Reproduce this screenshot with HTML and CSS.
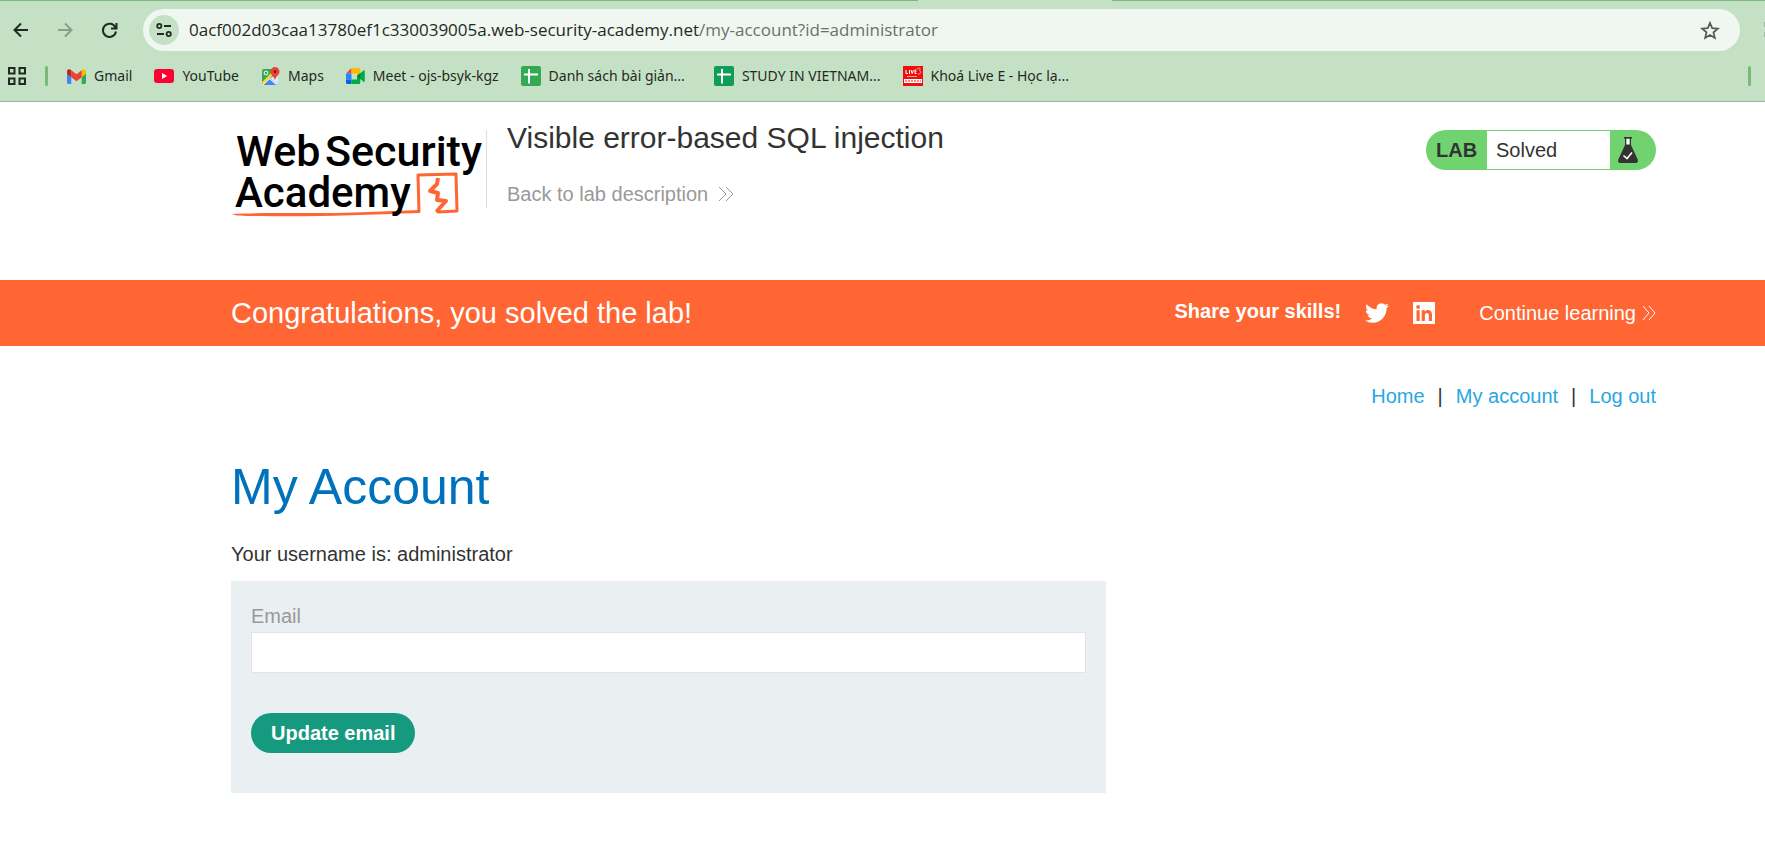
FILE: index.html
```html
<!DOCTYPE html>
<html lang="en">
<head>
<meta charset="utf-8">
<title>Visible error-based SQL injection</title>
<link rel="stylesheet" href="styles.css">
</head>
<body>
<div class="browser">
  <div class="tab-strip"><span class="active-tab"></span></div>
  <div class="toolbar">
    <button class="tool" aria-label="Back"><svg width="16" height="16" viewBox="0 0 16 16" fill="none" stroke="#1f2a22" stroke-width="2"><path d="M15 8H2M8 1.500 1.500 8 8 14.500"/></svg></button>
    <button class="tool" aria-label="Forward"><svg width="16" height="16" viewBox="0 0 16 16" fill="none" stroke="#84a086" stroke-width="2"><path d="M1 8h13M8 1.500 14.500 8 8 14.500"/></svg></button>
    <button class="tool" aria-label="Reload"><svg width="17" height="17" viewBox="0 0 17 17" fill="none" stroke="#1f2a22" stroke-width="2"><path d="M14.500 5.500A6.600 6.600 0 1 0 15 9.500M15.500 1v5.500H10"/></svg></button>
    <div class="address">
      <button class="site-info" aria-label="View site information"><svg width="16" height="14" viewBox="0 0 16 14" fill="none" stroke="#1f2a22" stroke-width="1.800"><circle cx="3.300" cy="3" r="2.100"/><path d="M8 3h7M1 11h7"/><circle cx="12.700" cy="11" r="2.100"/></svg></button>
      <div class="url">0acf002d03caa13780ef1c330039005a.web-security-academy.net<span class="path">/my-account?id=administrator</span></div>
      <button class="star" aria-label="Bookmark this tab"><svg width="20" height="19" viewBox="0 0 20 19" fill="none" stroke="#555b58" stroke-width="1.800"><path d="m10 2 2.200 5.200 5.600.5-4.300 3.700 1.300 5.500L10 14l-4.800 2.900 1.300-5.500L2.200 7.700l5.600-.5z"/></svg></button>
    </div>
    <svg class="extension" width="2" height="18" viewBox="0 0 2 18" fill="#9fb8a1"><path d="M1 1h1v5H1zM1 11h1v5H1z"/></svg>
  </div>
  <nav class="bookmarks" aria-label="Bookmarks">
    <button class="apps" aria-label="Apps"><svg width="18" height="18" viewBox="0 0 18 18" fill="none" stroke="#1f2a22" stroke-width="2"><path d="M1 1h5.500v5.500H1zM11.500 1H17v5.500h-5.500zM1 11.500h5.500V17H1zM11.500 11.500H17V17h-5.500z"/></svg></button>
    <span class="bar"></span>
    <div class="links">
      <a href="#"><svg width="19" height="15" viewBox="0 0 19 15"><path fill="#4285f4" d="M0 3h4.300v12H1.400A1.400 1.400 0 0 1 0 13.600z"/><path fill="#34a853" d="M14.700 3H19v10.600a1.400 1.400 0 0 1-1.400 1.400h-2.900z"/><path fill="#fbbc04" d="M14.700 1.200C16.500-.5 19 .2 19 2.600v2.200l-4.300 3.400z"/><path fill="#c5221f" d="M4.300 1.200C2.500-.5 0 .2 0 2.600v2.200l4.300 3.400z"/><path fill="#ea4335" d="m4.300 1.200 5.200 4 5.200-4v7l-5.200 4-5.200-4z"/></svg>Gmail</a>
      <a href="#"><svg width="20" height="14" viewBox="0 0 20 14"><rect width="20" height="14" rx="3" fill="#f03"/><path fill="#fff" d="m8 4 5.200 3L8 10z"/></svg>YouTube</a>
      <a href="#"><svg width="19" height="18" viewBox="0 0 19 18"><rect x="1" y="2" width="16" height="16" rx="2" fill="#34a853"/><path fill="#dfe7f2" d="M17 7v9a2 2 0 0 1-2 2h-1L9 11z"/><path fill="#4285f4" d="m9 11 7 7H3z"/><path stroke="#fbd33b" stroke-width="2.500" d="M1 17 12 6"/><path stroke="#fff" stroke-width="1" d="m8.500 11.500 7 6.500M2 18l7-6.500"/><circle cx="5" cy="6" r="1.900" fill="none" stroke="#fff"/><path fill="#ea4335" d="M14 0a4.500 4.500 0 0 1 4.500 4.700c0 3-3.500 4.300-4.500 8.300-1-4-4.500-5.300-4.500-8.300A4.500 4.500 0 0 1 14 0z"/><circle cx="14" cy="4.600" r="1.600" fill="#8e1c16"/></svg>Maps</a>
      <a href="#"><svg width="19" height="16" viewBox="0 0 19 16"><path fill="#ea4335" d="M0 5.500 5.500 0v5.500z"/><path fill="#2684fc" d="M0 5.500h5.500v6H0z"/><path fill="#0066da" d="M0 11.500h5.500V16H1.500A1.500 1.500 0 0 1 0 14.500z"/><path fill="#ffba00" d="M5.500 0h7.300A1.500 1.500 0 0 1 14.300 1.500V7L11 8V5.500H5.500z"/><path fill="#00ac47" d="M5.500 11.500H11V8l3.300 1v5.500a1.500 1.500 0 0 1-1.500 1.500H5.500zM11 8l6.500-5.600c.6-.5 1.300-.2 1.300.5v10.300c0 .7-.7 1-1.300.5z"/><path fill="#00832d" d="m11 8 3.300-2.900v5.800z"/></svg>Meet - ojs-bsyk-kgz</a>
      <a href="#"><svg width="20" height="20" viewBox="0 0 20 20"><rect width="20" height="20" rx="2" fill="#34a853"/><path stroke="#fff" stroke-width="2" d="M3 8.500h14M8 3v14.500"/></svg>Danh sách bài giản...</a>
      <a href="#" class="wide"><svg width="20" height="20" viewBox="0 0 20 20"><rect width="20" height="20" rx="2" fill="#0f9d58"/><path stroke="#fff" stroke-width="2" d="M3 8.500h14M8 3v14.500"/></svg>STUDY IN VIETNAM...</a>
      <a href="#"><svg width="20" height="20" viewBox="0 0 20 20"><path fill="#f00d0d" d="M0 0h20v20H0z"/><g fill="none" stroke="#fff"><path d="M3 4v3.500h2M6.500 4v4M8 4l1.200 3.500L10.500 4M13.500 4H12v3.500h1.500M12 5.700h1.300"/><path opacity=".6" d="M14 3c2.500-2 4-.5 2.500 1.500 2 1 1.500 4-1.500 3.500M4 10.500h10"/></g><path fill="#fff" d="M1 13h18v4H1z"/><path stroke="#f00d0d" stroke-dasharray="2 1" d="M2 15h16"/></svg>Khoá Live E - Học lạ...</a>
    </div>
    <span class="bar end"></span>
  </nav>
</div>
<header class="lab-header">
  <a href="#" class="logo" aria-label="Web Security Academy"><svg width="250" height="92" viewBox="0 0 250 92"><g class="logo-text"><text x="5" y="37">Web</text><text x="94" y="37">Security</text></g><path fill="none" stroke="#f63" stroke-width="3" stroke-linejoin="round" d="M188 83 187 46l38-1 1 37-19 1-2-2"/><path fill="none" stroke="#f63" stroke-width="4" stroke-linejoin="round" d="m206 82 9-10-9-1 1-7-8-2 7-7 1-6"/><path fill="#f63" d="M1 85c40-2 100 0 136-2l52-2v3c-60 2-110 4-160 3-14 0-26 0-28-2z"/><text class="logo-text second" x="4" y="78">Academy</text></svg></a>
  <div class="lab-title">
    <h2>Visible error-based SQL injection</h2>
    <a href="#">Back to lab description<svg width="16" height="16" viewBox="0 0 16 16" fill="none" stroke="currentColor"><path d="m1 1 7 7-7 7M8 1l7 7-7 7"/></svg></a>
  </div>
  <div class="lab-status"><strong>LAB</strong><span>Solved</span><svg width="20" height="26" viewBox="0 0 20 26"><path fill="#fff" d="M8 2h4v6H8z"/><path fill="#333332" d="M6 0h8v1.500h-1V8l6.700 14.500c.7 1.800-.2 3.500-2 3.500H2.300c-1.800 0-2.700-1.700-2-3.500L7 8V1.500H6zM8.300 1.500v6h3.400v-6z"/><path fill="none" stroke="#fff" stroke-width="1.600" d="m5.500 18.500 3.500 3 5-6"/></svg></div>
</header>
<section class="banner">
  <h4>Congratulations, you solved the lab!</h4>
  <div class="share">
    <strong>Share your skills!</strong>
    <a href="#" aria-label="Twitter"><svg width="24" height="24" viewBox="0 0 24 24" fill="#fff"><path d="M23.950 4.570a10 10 0 0 1-2.820.770 4.960 4.960 0 0 0 2.160-2.720c-.950.560-2 .960-3.130 1.190a4.920 4.920 0 0 0-8.380 4.480C7.690 8.090 4.070 6.130 1.640 3.160a4.820 4.820 0 0 0-.670 2.480c0 1.700.870 3.210 2.190 4.100a4.900 4.900 0 0 1-2.230-.620v.060a4.920 4.920 0 0 0 3.950 4.830 5 5 0 0 1-2.210.080 4.940 4.940 0 0 0 4.600 3.420A9.870 9.870 0 0 1 0 19.540a13.990 13.990 0 0 0 7.550 2.210c9.050 0 14-7.500 14-13.990 0-.210 0-.420-.020-.630a9.940 9.940 0 0 0 2.420-2.560z"/></svg></a>
    <a href="#" aria-label="LinkedIn"><svg width="22" height="22" viewBox="0 0 22 22"><rect width="22" height="22" rx="1" fill="#fff"/><g fill="#f63"><path d="M3.500 8.300h3.200V19H3.500zM8.700 8.300h3.100v1.500c1.600-2.700 7.200-2.500 7.200 2.700V19h-3.200v-5.700c0-3.400-3.900-3-3.900 0V19H8.700z"/><circle cx="5.100" cy="5" r="1.900"/></g></svg></a>
    <a href="#" class="continue">Continue learning<svg width="14" height="16" viewBox="0 0 14 16" fill="none" stroke="currentColor"><path d="m1 1 6 7-6 7M7 1l6 7-6 7"/></svg></a>
  </div>
</section>
<main>
  <nav class="top-links" aria-label="Account"><a href="#">Home</a><span>|</span><a href="#">My account</a><span>|</span><a href="#">Log out</a></nav>
  <h1>My Account</h1>
  <p>Your username is: administrator</p>
  <form class="email-form">
    <label for="email">Email</label>
    <input id="email" type="email">
    <button type="button">Update email</button>
  </form>
</main>
</body>
</html>
```
FILE: styles.css
```css
* { box-sizing: border-box; }
body {
  margin: 0;
  background: #fff;
  color: #333332;
  font: 20px/28px "Liberation Sans", Arial, sans-serif;
}
a { color: inherit; text-decoration: none; }
h1, h2, h4, p { margin: 0; font-weight: 400; }
button { border: 0; padding: 0; background: none; font: inherit; }
svg { display: block; flex: none; }

.browser {
  background: #c5e1c5;
  border-bottom: 1px solid #9bb39c;
  color: #1f2a22;
  font-family: "Noto Sans", "Open Sans", sans-serif;
}
.tab-strip { height: 1px; background: #75bb79; }
.active-tab { display: block; width: 194px; height: 1px; margin-left: 52%; background: #c5e1c5; }
.toolbar { display: flex; align-items: center; padding-top: 8px; }
.tool { display: flex; justify-content: center; width: 45px; }
.tool:first-child { width: 42px; }
.address {
  display: flex;
  flex: 1;
  align-items: center;
  height: 42px;
  margin: 0 24px 0 11px;
  padding: 0 20px 0 6px;
  border-radius: 21px;
  background: #f0f7f0;
}
.site-info {
  display: grid;
  place-items: center;
  width: 30px;
  height: 30px;
  border-radius: 50%;
  background: #c5e1c5;
}
.url { flex: 1; margin-left: 10px; font-family: "Open Sans", sans-serif; font-size: 17px; line-height: 24px; white-space: nowrap; }
.path { color: #6b706d; }
.extension { margin-left: -1px; }
.bookmarks { display: flex; align-items: center; height: 50px; padding: 0 14px 0 8px; }
.bar { width: 3px; height: 20px; margin: 0 19px; border-radius: 2px; background: #75bb79; }
.bar.end { margin: 0 0 0 auto; }
.links { display: flex; gap: 22px; }
.links a { display: flex; align-items: center; gap: 8px; font-size: 14px; line-height: 20px; white-space: nowrap; }
.wide { margin-left: 7px; }

.lab-header {
  display: flex;
  align-items: flex-start;
  min-height: 178px;
  padding: 18px 109px 0 231px;
}
.logo { margin-top: 9px; }
.logo svg { overflow: visible; }
.logo-text { fill: #000; font: 500 43px Roboto, sans-serif; }
.second { font-size: 42px; }
.lab-title { margin-left: 5px; padding-left: 21px; position: relative; }
.lab-title::before {
  content: "";
  position: absolute;
  left: 0;
  top: 10px;
  width: 1px;
  height: 78px;
  background: #ddd;
}
.lab-title h2 { font-size: 30px; line-height: 36px; }
.lab-title a { display: flex; align-items: center; gap: 10px; margin-top: 24px; color: #999; }
.lab-status {
  display: flex;
  align-items: center;
  width: 230px;
  height: 40px;
  margin: 10px 0 0 auto;
  padding: 1px 18px 1px 10px;
  border-radius: 20px;
  background: #71d36f;
}
.lab-status strong { width: 51px; }
.lab-status span { flex: 1; align-self: stretch; margin-right: 8px; padding-left: 9px; background: #fff; line-height: 38px; }

.banner {
  display: flex;
  align-items: center;
  justify-content: space-between;
  min-height: 66px;
  padding: 0 109px 0 231px;
  background: #f63;
  color: #fff;
}
.banner h4 { font-size: 29px; line-height: 36px; }
.share { display: flex; align-items: center; gap: 24px; }
.share strong { padding-bottom: 4px; }
.continue { display: flex; align-items: center; gap: 6px; margin-left: 20px; }

main { padding: 36px 109px 0 231px; }
.top-links { display: flex; justify-content: flex-end; gap: 13px; color: #333; }
.top-links a { color: #29a7e1; }
h1 { margin-top: 47px; color: #0071bc; font-size: 50px; line-height: 60px; }
main p { margin: 23px 0 13px; }
.email-form { max-width: 875px; padding: 20px 20px 40px; background: #eaeff2; }
.email-form label { display: block; line-height: 31px; color: #999; }
.email-form input {
  display: block;
  width: 100%;
  height: 41px;
  padding: 0 10px;
  border: 1px solid #e4e4e4;
  background: #fff;
  font: inherit;
}
.email-form button {
  height: 40px;
  margin-top: 40px;
  padding: 0 20px;
  border-radius: 20px;
  background: #159a80;
  color: #fff;
  font-weight: 700;
}
```
